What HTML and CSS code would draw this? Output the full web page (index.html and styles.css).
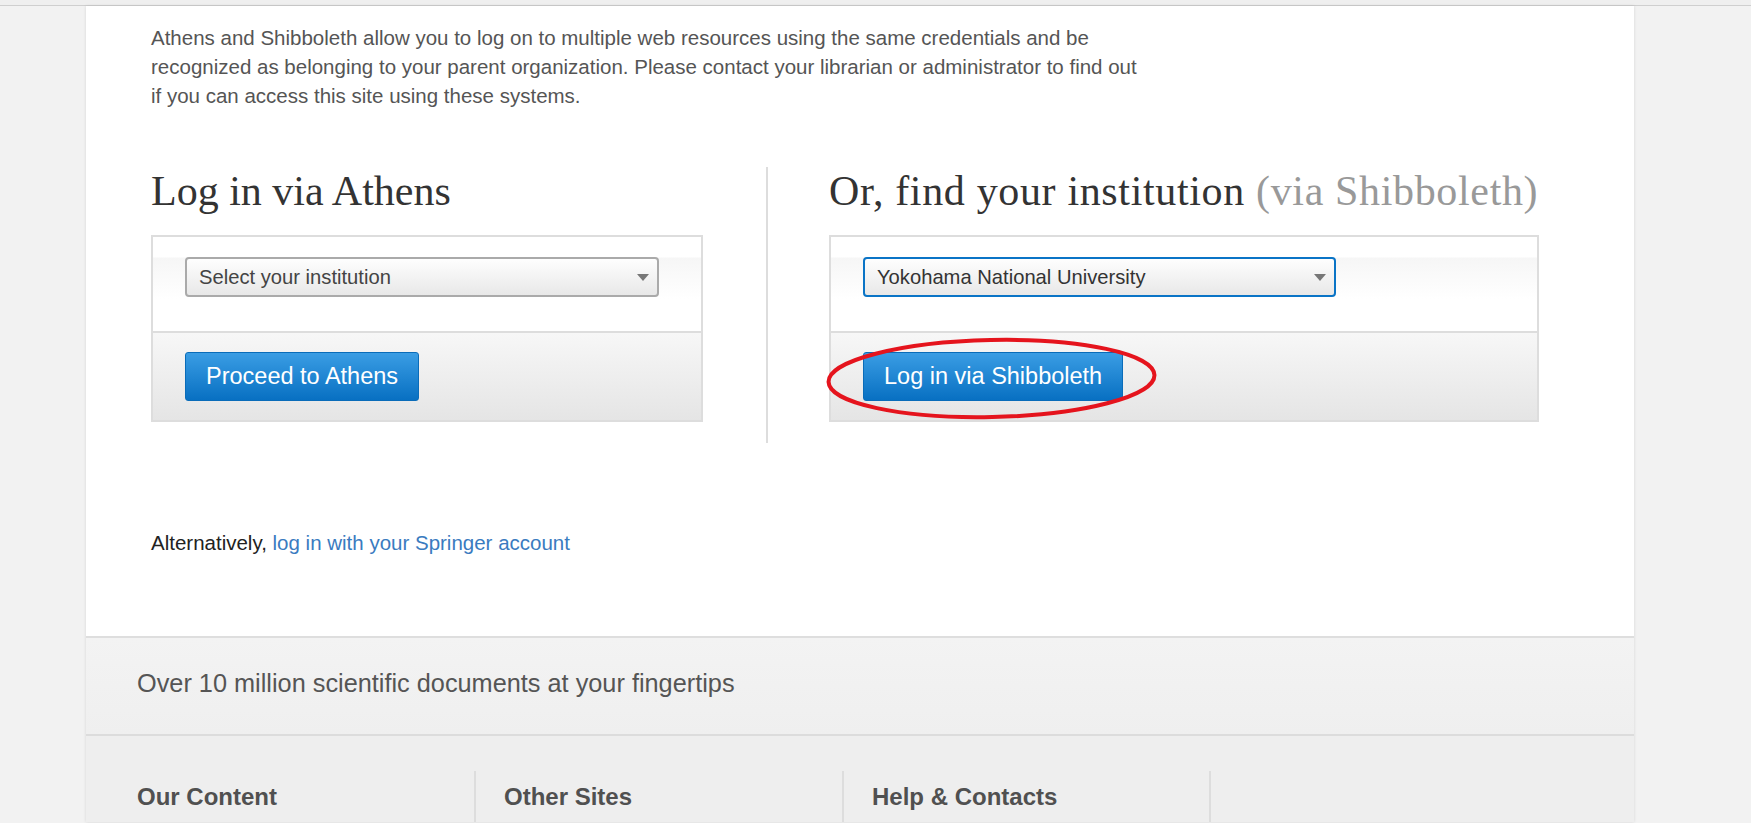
FILE: index.html
```html
<!DOCTYPE html>
<html lang="en">
<head>
<meta charset="utf-8">
<title>Log in via Athens or Shibboleth</title>
<link rel="stylesheet" href="styles.css">
</head>
<body>
<div class="topbar"></div>
<div class="page">
  <main class="main">
    <p class="intro">Athens and Shibboleth allow you to log on to multiple web resources using the same credentials and be recognized as belonging to your parent organization. Please contact your librarian or administrator to find out if you can access this site using these systems.</p>

    <div class="login-row">
      <section class="login-col athens">
        <h2 class="login-title">Log in via Athens</h2>
        <div class="login-box">
          <div class="box-top">
            <div class="select select-athens"><span class="select-text">Select your institution</span><span class="caret"></span></div>
          </div>
          <div class="box-bottom">
            <button class="btn" type="button">Proceed to Athens</button>
          </div>
        </div>
      </section>

      <section class="login-col shib">
        <h2 class="login-title login-title-shib">Or, find your institution <span class="muted">(via Shibboleth)</span></h2>
        <div class="login-box">
          <div class="box-top">
            <div class="select select-shib"><span class="select-text">Yokohama National University</span><span class="caret"></span></div>
          </div>
          <div class="box-bottom">
            <div class="btn-wrap">
              <button class="btn" type="button">Log in via Shibboleth</button>
              <svg class="annot" width="335" height="85" viewBox="0 0 335 85" aria-hidden="true">
                <ellipse cx="167.5" cy="42.5" rx="163" ry="38.5" fill="none" stroke="#e5141d" stroke-width="4" transform="rotate(-1.2 167.5 42.5)"/>
              </svg>
            </div>
          </div>
        </div>
      </section>
    </div>

    <p class="alt">Alternatively, <a class="alt-link" href="#">log in with your Springer account</a></p>
  </main>

  <footer class="footer">
    <div class="tagline">Over 10 million scientific documents at your fingertips</div>
    <div class="footer-cols">
      <div class="fcol"><h3 class="fhead">Our Content</h3></div>
      <div class="fcol"><h3 class="fhead">Other Sites</h3></div>
      <div class="fcol"><h3 class="fhead">Help &amp; Contacts</h3></div>
      <div class="fcol"></div>
    </div>
  </footer>
</div>
</body>
</html>
```

FILE: styles.css
```css
html, body {
  margin: 0;
  padding: 0;
}

body {
  background: #f2f2f2;
  font-family: "Liberation Sans", Arial, sans-serif;
  color: #555;
  height: 823px;
  overflow: hidden;
}

.topbar {
  height: 5px;
  background: #efefef;
  border-bottom: 1px solid #cfcfcf;
}

.page {
  width: 1548px;
  margin-left: 86px;
  box-shadow: 0 0 3px rgba(0, 0, 0, 0.12);
}

.main {
  background: #fff;
  padding: 17px 95px 78px 65px;
}

.intro {
  margin: 0;
  max-width: 995px;
  font-size: 20.5px;
  line-height: 29px;
  color: #555;
}

.login-row {
  display: flex;
  margin-top: 57px;
}

.login-col {
  padding-bottom: 21px;
}

.athens {
  width: 552px;
  margin-right: 63px;
}

.shib {
  flex: 1;
  border-left: 2px solid #ddd;
  padding-left: 61px;
}

.login-title {
  margin: 0 0 23px;
  padding-top: 3px;
  font-family: "Liberation Serif", "Times New Roman", serif;
  font-weight: normal;
  font-size: 42px;
  line-height: 42px;
  color: #333;
  white-space: nowrap;
}

.login-title-shib {
  letter-spacing: 0.65px;
}

.muted {
  color: #999;
}

.login-box {
  border: 2px solid #ddd;
}

.box-top {
  padding: 20px 32px 34px;
  background: linear-gradient(to bottom, #fff 0, #fff 20px, #f6f6f6 21px, #fff 62px);
}

.box-bottom {
  border-top: 2px solid #ddd;
  padding: 19px 32px;
  background: linear-gradient(to bottom, #f7f7f7, #e5e5e5);
}

.select {
  box-sizing: border-box;
  height: 40px;
  display: flex;
  align-items: center;
  justify-content: space-between;
  padding: 0 8px 0 12px;
  border: 2px solid #aaa;
  border-radius: 4px;
  background: linear-gradient(to bottom, #fefefe, #e8e8e8);
  font-size: 20.2px;
  color: #444;
}

.select-athens {
  width: 474px;
}

.select-shib {
  width: 473px;
  border-color: #0a74c6;
  color: #333;
}

.caret {
  width: 0;
  height: 0;
  border-left: 6px solid transparent;
  border-right: 6px solid transparent;
  border-top: 7px solid #777;
}

.btn-wrap {
  position: relative;
  display: inline-block;
  vertical-align: top;
}

.btn {
  box-sizing: border-box;
  height: 49px;
  display: block;
  padding: 0 20px;
  border: 1px solid #0a6cb9;
  border-radius: 3px;
  background: linear-gradient(to bottom, #3a9de4, #0870c2);
  color: #fff;
  font-family: "Liberation Sans", Arial, sans-serif;
  font-size: 23.5px;
  white-space: nowrap;
  cursor: pointer;
}

.annot {
  position: absolute;
  left: -39px;
  top: -16px;
  pointer-events: none;
}

.alt {
  margin: 86px 0 0;
  font-size: 20.5px;
  line-height: 28.5px;
  color: #222;
}

.alt-link {
  color: #3a7bc0;
  text-decoration: none;
}

.footer {
  background: #eee;
}

.tagline {
  border-top: 2px solid #dedede;
  border-bottom: 2px solid #dcdcdc;
  background: linear-gradient(to bottom, #f3f3f3, #efefef);
  padding: 30px 51px 36px;
  font-size: 25.3px;
  line-height: 30px;
  color: #555;
}

.footer-cols {
  display: grid;
  grid-template-columns: 337px 368px 367px 1fr;
  padding: 35px 0 0 51px;
  height: 51px;
  overflow: hidden;
}

.fcol {
  padding-top: 11px;
}

.fcol + .fcol {
  border-left: 2px solid #ddd;
  padding-left: 28px;
}

.fhead {
  margin: 0;
  font-size: 24px;
  line-height: 30px;
  font-weight: bold;
  color: #505050;
}
```
